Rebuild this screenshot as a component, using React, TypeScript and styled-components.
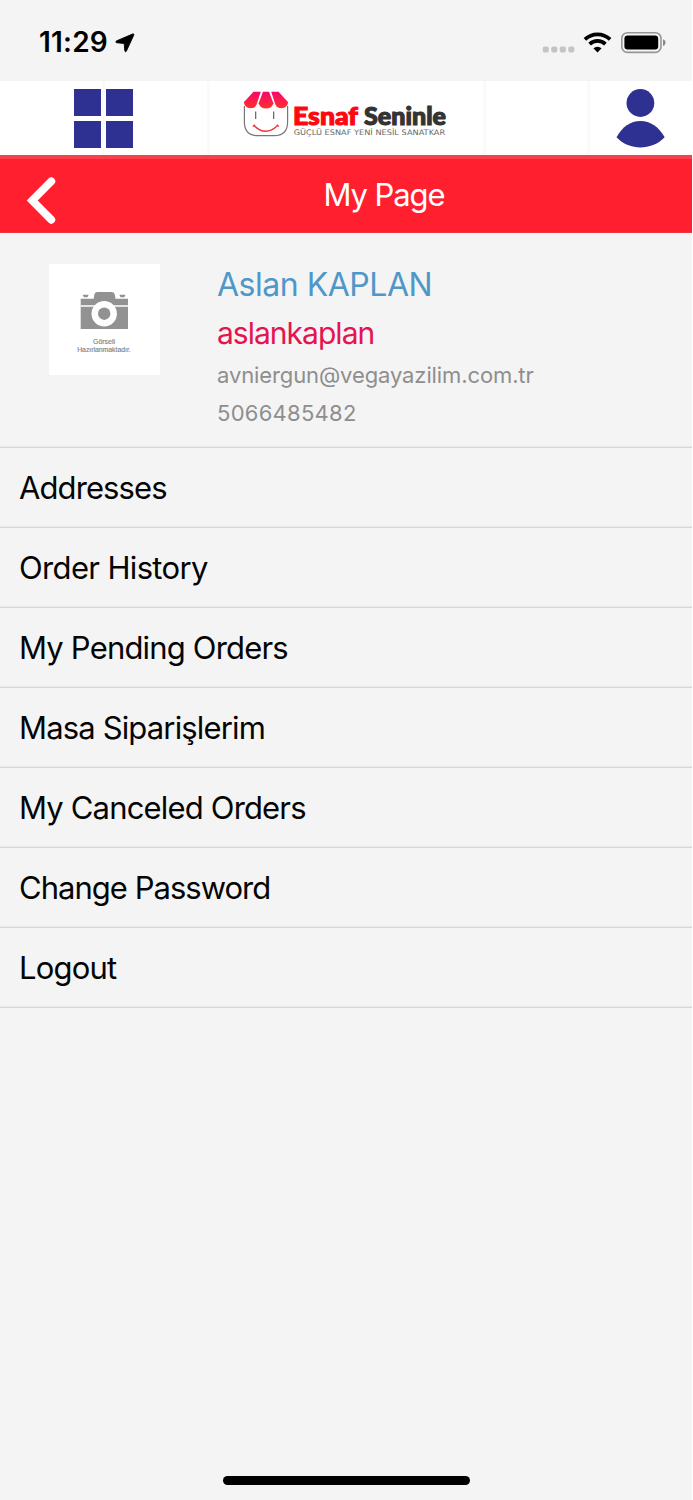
import React from 'react'
import styled, { createGlobalStyle } from 'styled-components'

const GlobalStyle = createGlobalStyle`
  * {
    box-sizing: border-box;
  }

  body {
    margin: 0;
    background: #ffffff;
    font-family: Inter, 'Liberation Sans', sans-serif;
  }
`

const Screen = styled.div`
  display: flex;
  flex-direction: column;
  width: 692px;
  height: 1500px;
  background: #f4f4f4;
  overflow: hidden;
`

const StatusBar = styled.div`
  display: flex;
  justify-content: space-between;
  height: 81px;
  padding: 25px 26px 0 39px;
`

const StatusGroup = styled.div`
  display: flex;
  align-items: center;
  height: 35px;
`

const Time = styled.span`
  font-size: 28px;
  font-weight: 600;
  line-height: 35px;
  letter-spacing: 0.2px;
  width: 76px;
  white-space: nowrap;
`

const Header = styled.header`
  display: grid;
  grid-template-columns: 210px 276px 104px 102px;
  height: 74px;
  background: #ffffff;
`

const HeaderCell = styled.div<{ $last?: boolean; $split?: boolean }>`
  display: flex;
  border-right: ${({ $last }) => ($last ? 'none' : '3px solid #fafafa')};
  background: ${({ $split }) =>
    $split ? 'linear-gradient(to right, #fff 102px, #fafafa 102px, #fafafa 105px, #fff 105px)' : '#fff'};
`

const TitleBar = styled.div`
  display: grid;
  grid-template-columns: 76px 1fr;
  height: 78px;
  background: #ff1f2e;
  border-top: 4px solid #fb3f4a;
  border-bottom: 1px solid #f5323f;
`

const Title = styled.h1`
  margin: 0;
  padding-top: 15px;
  color: #ffffff;
  font-size: 31px;
  font-weight: 400;
  line-height: 42px;
  letter-spacing: -1.1px;
  text-align: center;
`

const Profile = styled.section`
  display: flex;
  height: 215px;
  padding: 31px 0 0 49px;
  border-bottom: 1px solid #d7d7d7;
  box-shadow: inset 0 -1px #e8e8e8;
`

const Avatar = styled.div`
  width: 111px;
  height: 111px;
  margin-right: 57px;
  background: #ffffff;
`

const ProfileText = styled.div`
  display: flex;
  flex-direction: column;
  white-space: nowrap;
`

const Line = styled.div<{ $color: string; $size: number; $height: number; $spacing: number }>`
  color: ${({ $color }) => $color};
  font-size: ${({ $size }) => $size}px;
  line-height: ${({ $height }) => $height}px;
  letter-spacing: ${({ $spacing }) => $spacing}px;
`

const Menu = styled.nav`
  display: flex;
  flex-direction: column;
  flex: 1;
`

const MenuItem = styled.div<{ $spacing: number }>`
  height: 80px;
  padding-left: 19px;
  border-bottom: 1px solid #d7d7d7;
  box-shadow: inset 0 -1px #e8e8e8;
  color: #050505;
  font-size: 31px;
  line-height: 80px;
  letter-spacing: ${({ $spacing }) => $spacing}px;
  white-space: nowrap;
`

const HomeIndicator = styled.div`
  align-self: center;
  width: 247px;
  height: 9px;
  margin-bottom: 15px;
  border-radius: 5px;
  background: #000000;
`

const LocationIcon = () => (
  <svg width="20" height="20" viewBox="0 0 20 20">
    <path d="M17.6 1 1.5 7.9C0.6 8.4 0.6 9.5 1.6 9.7L9.2 10.5 9.8 17.8C9.9 18.9 11 19 11.4 18.1L18.7 2.2C19.1 1.2 18.5 0.6 17.6 1Z" stroke="#000" strokeWidth="0.9" />
  </svg>
)

const StatusIcons = () => (
  <svg width="124" height="24" viewBox="542 31 124 24">
    {[542.8, 551.3, 559.8, 568.3].map(x => (
      <rect key={x} x={x} y="46.5" width="6" height="6" rx="1.8" fill="#c4c4c4" />
    ))}
    <g fill="none" stroke="#000" strokeWidth="3.7">
      <path d="M584.9 39.4A18.2 18.2 0 0 1 610.1 39.4" />
      <path d="M589.6 44.1A11.4 11.4 0 0 1 605.4 44.1" />
    </g>
    <path d="M593.4 48.3A6 6 0 0 1 601.6 48.3L597.5 52.5Z" />
    <rect x="621.8" y="32.8" width="39.2" height="19.6" rx="5.6" fill="none" stroke="#969696" strokeWidth="1.6" />
    <rect x="624.4" y="35.6" width="33.8" height="13.8" rx="3.2" />
    <path d="M663 39.2Q665.6 40.2 665.6 42.6 665.6 45 663 46Z" fill="#888" />
  </svg>
)

const GridIcon = () => (
  <svg width="207" height="74" viewBox="0 81 207 74" fill="#2e3192">
    <rect x="74" y="89" width="27" height="27" />
    <rect x="106" y="89" width="27" height="27" />
    <rect x="74" y="121" width="27" height="27" />
    <rect x="106" y="121" width="27" height="27" />
  </svg>
)

const UserIcon = () => (
  <svg width="102" height="74" viewBox="590 81 102 74" fill="#2e3192">
    <circle cx="640.4" cy="103" r="13.9" />
    <path d="M616.5 137.3C622 127 630.5 121 640.4 121S659 127 664.7 137.3C657.5 144.5 649 147.5 640.4 147.5S623.5 144.5 616.5 137.3Z" />
  </svg>
)

const Logo = () => (
  <svg width="273" height="74" viewBox="210 81 273 74">
    <defs>
      <linearGradient id="awning" x1="0" y1="0" x2="0" y2="1">
        <stop offset="0" stopColor="#f5086f" />
        <stop offset="1" stopColor="#ff3028" />
      </linearGradient>
    </defs>
    <path
      d="M244.4 106V122Q244.4 135.7 258 135.7H274Q287.6 135.7 287.6 122V106"
      fill="none"
      stroke="#777"
      strokeWidth="1.2"
    />
    <g fill="url(#awning)">
      <path d="M253.5 91.8H260.8L256.6 104.6Q254.8 108.6 250.3 108.3 244.8 107.6 243.8 102.2Z" />
      <path d="M263 91.8H269L273.4 103.2Q271.6 108.6 266 108.6 260.4 108.6 258.6 103.2Z" />
      <path d="M271.2 91.8H278.5L288.2 102.2Q287.2 107.6 281.7 108.3 277.2 108.6 275.4 104.6Z" />
    </g>
    <path d="M255.7 111.5V119M273.7 111.5V119" stroke="#555" strokeWidth="1.1" />
    <path d="M254 125.5Q265.5 137 277.7 125.5M252.8 126.5 255 124.7M276.7 124.7 278.8 126.5" fill="none" stroke="#ee3038" strokeWidth="1.3" />
    <g fontFamily="Lato" fontSize="25" fontWeight="900" strokeWidth="1.1">
      <text x="293" y="124.8" textLength="65" lengthAdjust="spacingAndGlyphs" fill="#ff0710" stroke="#ff0710">
        Esnaf
      </text>
      <text x="364" y="124.8" textLength="82" lengthAdjust="spacingAndGlyphs" fill="#333" stroke="#333">
        Seninle
      </text>
    </g>
    <text x="293.7" y="134.7" textLength="151.5" lengthAdjust="spacingAndGlyphs" fontFamily="DejaVu Sans" fontSize="7.6" fill="#666">
      GÜÇLÜ ESNAF YENİ NESİL SANATKAR
    </text>
  </svg>
)

const BackIcon = () => (
  <svg width="76" height="73" viewBox="0 159 76 73">
    <path d="M51.3 181.3 32.2 200.5 51.3 219.8" fill="none" stroke="#fff" strokeWidth="7.8" strokeLinecap="round" />
  </svg>
)

const CameraPlaceholder = () => (
  <svg width="111" height="111" viewBox="49 264 111 111" fill="#929292">
    <path d="M80.7 298.7H93.7L94.3 294.5Q94.7 292 97 292H112Q114.3 292 114.8 294.5L115.5 298.7H128V329H80.7Z" />
    <path d="M82.5 294.8H88.7L87.5 297.2H84ZM119.3 294.8H125.5L124.3 297.2H120.5Z" />
    <path d="M80.7 306H128" stroke="#fff" strokeWidth="1.7" />
    <circle cx="104.2" cy="313.7" r="12.7" fill="#fff" />
    <circle cx="104.2" cy="313.7" r="6.2" />
    <g fontFamily="Liberation Sans" fontSize="6.4" fill="#858585" stroke="#858585" strokeWidth="0.15">
      <text x="93" y="344.4" textLength="22" lengthAdjust="spacingAndGlyphs">
        Görseli
      </text>
      <text x="77.2" y="352" textLength="53.5" lengthAdjust="spacingAndGlyphs">
        Hazırlanmaktadır.
      </text>
    </g>
  </svg>
)

const menuItems = [
  { label: 'Addresses', spacing: -0.9 },
  { label: 'Order History', spacing: -0.65 },
  { label: 'My Pending Orders', spacing: -0.82 },
  { label: 'Masa Siparişlerim', spacing: -0.85 },
  { label: 'My Canceled Orders', spacing: -0.83 },
  { label: 'Change Password', spacing: -0.98 },
  { label: 'Logout', spacing: -0.8 }
]

export default function App() {
  return (
    <>
      <GlobalStyle />
      <Screen>
        <StatusBar>
          <StatusGroup>
            <Time>11:29</Time>
            <LocationIcon />
          </StatusGroup>
          <StatusGroup>
            <StatusIcons />
          </StatusGroup>
        </StatusBar>
        <Header>
          <HeaderCell $split>
            <GridIcon />
          </HeaderCell>
          <HeaderCell>
            <Logo />
          </HeaderCell>
          <HeaderCell />
          <HeaderCell $last>
            <UserIcon />
          </HeaderCell>
        </Header>
        <TitleBar>
          <BackIcon />
          <Title>My Page</Title>
        </TitleBar>
        <Profile>
          <Avatar>
            <CameraPlaceholder />
          </Avatar>
          <ProfileText>
            <Line $color="#5097c9" $size={32} $height={42} $spacing={-0.48}>
              Aslan KAPLAN
            </Line>
            <Line $color="#e5134f" $size={30} $height={55} $spacing={-0.98}>
              aslankaplan
            </Line>
            <Line $color="#8e8e8e" $size={22} $height={28} $spacing={-0.11}>
              avniergun@vegayazilim.com.tr
            </Line>
            <Line $color="#8e8e8e" $size={22} $height={48} $spacing={0.27}>
              5066485482
            </Line>
          </ProfileText>
        </Profile>
        <Menu>
          {menuItems.map(({ label, spacing }) => (
            <MenuItem key={label} $spacing={spacing}>
              {label}
            </MenuItem>
          ))}
        </Menu>
        <HomeIndicator />
      </Screen>
    </>
  )
}
